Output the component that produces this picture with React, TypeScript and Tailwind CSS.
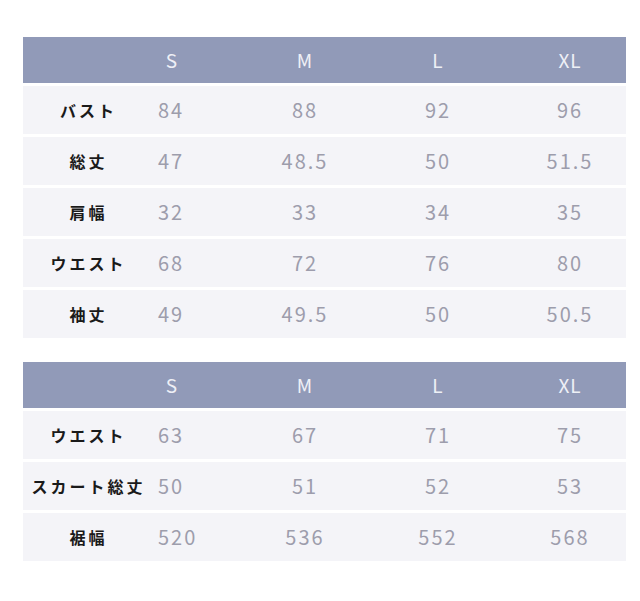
const sizes = ["S", "M", "L", "XL"];

const topRows = [
  { label: "バスト", values: ["84", "88", "92", "96"] },
  { label: "総丈", values: ["47", "48.5", "50", "51.5"] },
  { label: "肩幅", values: ["32", "33", "34", "35"] },
  { label: "ウエスト", values: ["68", "72", "76", "80"] },
  { label: "袖丈", values: ["49", "49.5", "50", "50.5"] }
];

const bottomRows = [
  { label: "ウエスト", values: ["63", "67", "71", "75"] },
  { label: "スカート総丈", values: ["50", "51", "52", "53"] },
  { label: "裾幅", values: ["520", "536", "552", "568"] }
];

// column cells: label, S, M, L, XL
const headCell = ["", "text-center", "text-center", "text-center", "pl-[55px] text-center"];
const valueCell = ["", "pl-[7px] text-left", "text-center", "text-center", "pl-[55px] text-center"];

const grid = "grid grid-cols-[128px_42px_224px_42px_167px] items-center";

function SizeTable({ rows }: { rows: { label: string; values: string[] }[] }) {
  return (
    <div className="flex w-[603px] flex-col gap-[3px]">
      <div className={`${grid} h-[46px] bg-[#919ab8] text-[19px] tracking-[1px] text-[#eef0f6]`}>
        <div />
        {sizes.map((s, i) => (
          <div key={s} className={`${headCell[i + 1]} whitespace-nowrap`}>
            {s}
          </div>
        ))}
      </div>
      {rows.map((row) => (
        <div key={row.label} className={`${grid} h-[48px] bg-[#f4f4f8]`}>
          <div className="whitespace-nowrap pl-[3px] text-center text-[16px] font-bold tracking-[3px] text-[#1a1a1a]">
            {row.label}
          </div>
          {row.values.map((v, i) => (
            <div
              key={i}
              className={`${valueCell[i + 1]} whitespace-nowrap text-[20px] tracking-[2px] text-[#9d9dac]`}
            >
              {v}
            </div>
          ))}
        </div>
      ))}
    </div>
  );
}

export default function App() {
  return (
    <div className="h-[601px] w-[640px] bg-white pl-[23px] pt-[37px] font-['Noto_Sans_CJK_JP',sans-serif]">
      <div className="flex flex-col gap-[24px]">
        <SizeTable rows={topRows} />
        <SizeTable rows={bottomRows} />
      </div>
    </div>
  );
}
